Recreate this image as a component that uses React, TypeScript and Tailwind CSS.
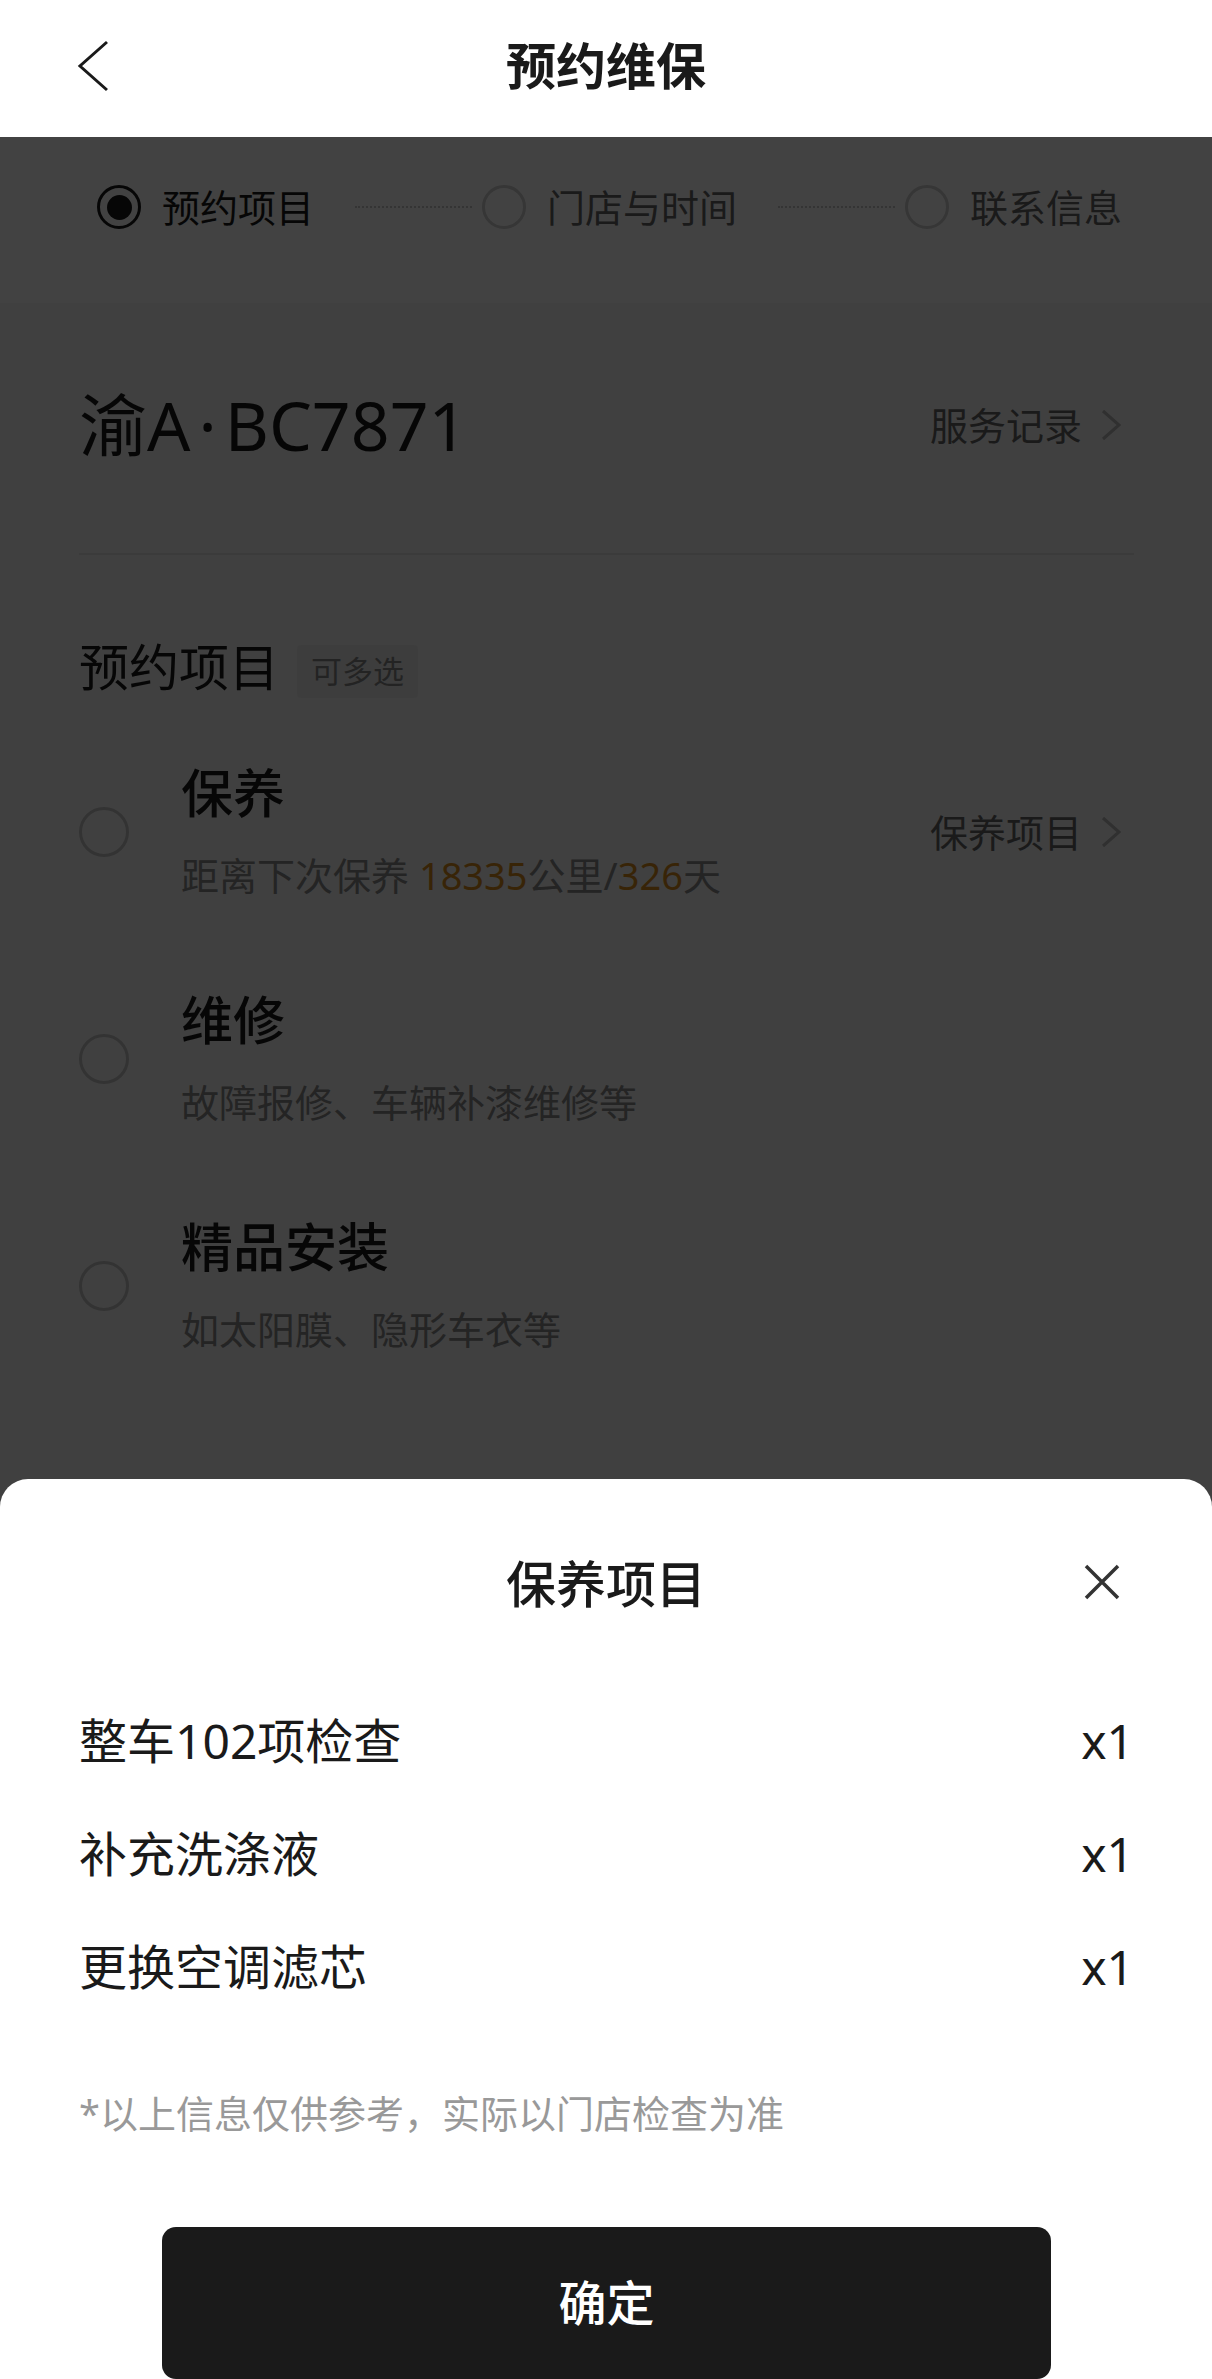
import { useState } from 'react';

interface Step {
  label: string;
  active: boolean;
}

interface ServiceItem {
  id: string;
  title: string;
  desc: React.ReactNode;
  link?: string;
}

interface PackageItem {
  name: string;
  count: number;
}

const steps: Step[] = [
  { label: '预约项目', active: true },
  { label: '门店与时间', active: false },
  { label: '联系信息', active: false },
];

const services: ServiceItem[] = [
  {
    id: 'maintain',
    title: '保养',
    desc: (
      <>
        距离下次保养 <span className="text-[#d88d1e]">18335</span>公里/<span className="text-[#d88d1e]">326</span>天
      </>
    ),
    link: '保养项目',
  },
  { id: 'repair', title: '维修', desc: '故障报修、车辆补漆维修等' },
  { id: 'install', title: '精品安装', desc: '如太阳膜、隐形车衣等' },
];

const packageItems: PackageItem[] = [
  { name: '整车102项检查', count: 1 },
  { name: '补充洗涤液', count: 1 },
  { name: '更换空调滤芯', count: 1 },
];

function ChevronRight() {
  return (
    <svg width="22" height="32" viewBox="0 0 22 32" fill="none" className="shrink-0">
      <polyline points="3,2 19,16 3,30" stroke="#b8b8b8" strokeWidth="3" strokeLinejoin="miter" />
    </svg>
  );
}

function LinkText({ text }: { text: string }) {
  return (
    <button type="button" className="mr-[12px] flex items-center gap-[18px] text-[38px] leading-[50px] text-[#666]">
      {text}
      <ChevronRight />
    </button>
  );
}

function StepBar() {
  return (
    <div className="flex h-[166px] items-start bg-white pl-[97px] pt-[48px]">
      {steps.map((step, i) => (
        <div key={step.label} className="flex items-center">
          {i > 0 && (
            <div className="ml-[41px] mr-[10px] h-0 w-[117px] border-t-[2px] border-dotted border-[#c8c8c8]" />
          )}
          <div className="flex items-center gap-[21px]">
            {step.active ? (
              <span className="flex h-[44px] w-[44px] items-center justify-center rounded-full border-[3px] border-[#1a1a1a]">
                <span className="h-[25px] w-[25px] rounded-full bg-[#1a1a1a]" />
              </span>
            ) : (
              <span className="h-[44px] w-[44px] rounded-full border-[3px] border-[#cfcfcf]" />
            )}
            <span className={`text-[38px] leading-[44px] ${step.active ? 'text-[#1a1a1a]' : 'text-[#666]'}`}>
              {step.label}
            </span>
          </div>
        </div>
      ))}
    </div>
  );
}

export default function App() {
  const [selected, setSelected] = useState<string[]>([]);
  const [sheetOpen, setSheetOpen] = useState(true);

  const toggle = (id: string) => {
    setSelected((prev) => (prev.includes(id) ? prev.filter((x) => x !== id) : [...prev, id]));
  };

  return (
    <div className="relative flex h-[2379px] w-full flex-col overflow-hidden bg-[#f7f7f7] font-['Noto_Sans','Noto_Sans_CJK_SC',sans-serif] text-[#1a1a1a]">
      <header className="grid h-[137px] shrink-0 grid-cols-[1fr_auto_1fr] items-center bg-white pb-[5px]">
        <button type="button" className="ml-[77px] justify-self-start">
          <svg width="32" height="52" viewBox="0 0 32 52" fill="none">
            <polyline points="30,2 3,26 30,50" stroke="#1a1a1a" strokeWidth="3" />
          </svg>
        </button>
        <h1 className="text-[50px] font-bold leading-[60px]">预约维保</h1>
        <div />
      </header>

      <main className="relative flex-1">
        <StepBar />

        <section className="pl-[79px] pr-[78px]">
          <div className="mt-[82px] flex h-[80px] items-center justify-between">
            <div className="text-[68px] leading-[80px]">
              渝A<span className="px-[8px]">·</span>BC7871
            </div>
            <LinkText text="服务记录" />
          </div>

          <div className="mt-[88px] h-[2px] bg-[#e3e3e3]" />

          <div className="mt-[82px] flex h-[60px] items-center gap-[18px]">
            <h2 className="text-[50px] leading-[60px]">预约项目</h2>
            <span className="mt-[8px] flex h-[53px] items-center rounded-[4px] bg-[#ececec] px-[14px] text-[31px] text-[#888]">
              可多选
            </span>
          </div>

          <ul className="mt-[66px] flex flex-col gap-[90px]">
            {services.map((s) => (
              <li key={s.id} className="flex items-center" onClick={() => toggle(s.id)}>
                <span
                  className={`h-[50px] w-[50px] shrink-0 rounded-full border-[3px] ${
                    selected.includes(s.id) ? 'border-[#1a1a1a]' : 'border-[#c4c4c4]'
                  }`}
                />
                <div className="ml-[52px] flex flex-1 flex-col">
                  <span className="text-[52px] font-medium leading-[60px]">{s.title}</span>
                  <span className="mt-[27px] text-[38px] leading-[50px] text-[#8a8a8a]">{s.desc}</span>
                </div>
                {s.link && <LinkText text={s.link} />}
              </li>
            ))}
          </ul>
        </section>

        {sheetOpen && <div className="absolute inset-0 bg-black/[0.74]" />}
      </main>

      {sheetOpen && (
        <div className="absolute inset-x-0 bottom-0 rounded-t-[28px] bg-white pt-[75px]">
          <div className="grid h-[60px] grid-cols-[1fr_auto_1fr] items-center">
            <div />
            <h3 className="text-[50px] font-medium leading-[60px]">保养项目</h3>
            <button type="button" onClick={() => setSheetOpen(false)} className="mr-[92px] mt-[-4px] justify-self-end">
              <svg width="36" height="36" viewBox="0 0 36 36" fill="none">
                <path d="M2 2L34 34M34 2L2 34" stroke="#333" strokeWidth="3.5" />
              </svg>
            </button>
          </div>

          <ul className="mt-[70px]">
            {packageItems.map((item) => (
              <li key={item.name} className="flex h-[113px] items-center justify-between pl-[79px] pr-[78px] text-[48px]">
                <span>{item.name}</span>
                <span>x{item.count}</span>
              </li>
            ))}
          </ul>

          <p className="mt-[65px] px-[79px] text-[38px] leading-[50px] text-[#999]">*以上信息仅供参考，实际以门店检查为准</p>

          <button
            type="button"
            onClick={() => setSheetOpen(false)}
            className="mx-[162px] mt-[89px] flex h-[152px] w-[889px] items-center justify-center rounded-[14px] bg-[#1a1a1a] text-[48px] font-medium text-white"
          >
            确定
          </button>
        </div>
      )}
    </div>
  );
}
